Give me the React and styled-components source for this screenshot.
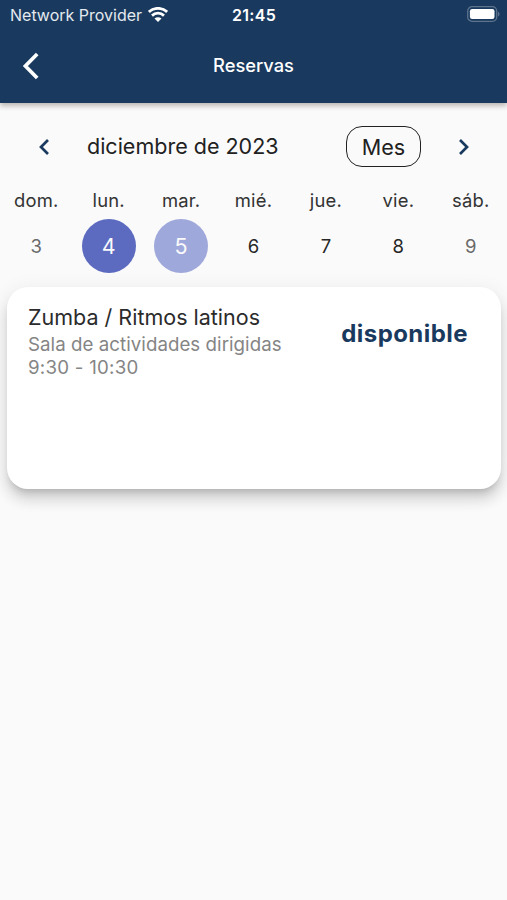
import React from 'react';
import styled, { createGlobalStyle } from 'styled-components';

const DAYS = [
  { name: 'dom.', number: 3, weekend: true },
  { name: 'lun.', number: 4, color: '#5c6bc0' },
  { name: 'mar.', number: 5, color: '#9fa8da' },
  { name: 'mié.', number: 6 },
  { name: 'jue.', number: 7 },
  { name: 'vie.', number: 8 },
  { name: 'sáb.', number: 9, weekend: true },
];

const App = () => {
  return (
    <>
      <GlobalStyle />
      <Screen>
        <Header>
          <StatusBar>
            <Carrier>
              Network Provider
              <WifiIcon />
            </Carrier>
            <Clock>21:45</Clock>
            <BatteryIcon />
          </StatusBar>
          <NavBar>
            <BackButton aria-label="Atrás">
              <svg width="18" height="28" viewBox="0 0 18 28" fill="none">
                <path d="M15.2 2L3.4 14L15.2 26" stroke="#fff" strokeWidth="3.7" />
              </svg>
            </BackButton>
            <Title>Reservas</Title>
          </NavBar>
        </Header>

        <MonthBar>
          <ArrowButton aria-label="Anterior">
            <svg width="12" height="18" viewBox="0 0 12 18" fill="none">
              <path d="M10 2L3 9L10 16" stroke="#193a5e" strokeWidth="2.7" />
            </svg>
          </ArrowButton>
          <Month>diciembre de 2023</Month>
          <FormatButton>Mes</FormatButton>
          <ArrowButton aria-label="Siguiente">
            <svg width="12" height="18" viewBox="0 0 12 18" fill="none">
              <path d="M2 2L9 9L2 16" stroke="#193a5e" strokeWidth="2.7" />
            </svg>
          </ArrowButton>
        </MonthBar>

        <Week>
          {DAYS.map(({ name, number, weekend, color }) => (
            <Day key={name}>
              <DayName>{name}</DayName>
              <DayNumber $weekend={weekend} $color={color}>
                {number}
              </DayNumber>
            </Day>
          ))}
        </Week>

        <Card>
          <div>
            <Activity>Zumba / Ritmos latinos</Activity>
            <Detail>Sala de actividades dirigidas</Detail>
            <Detail $time>9:30 - 10:30</Detail>
          </div>
          <Status>disponible</Status>
        </Card>
      </Screen>
    </>
  );
};

export default App;

const WifiIcon = () => (
  <svg width="20" height="15" viewBox="0 0 20 15" fill="none">
    <path d="M0.9 4.9C6 0.2 14 0.2 19.1 4.9" stroke="#fff" strokeWidth="2.9" />
    <path d="M4 8.6C7.5 5.4 12.5 5.4 16 8.6" stroke="#fff" strokeWidth="2.8" />
    <path d="M10 15L6.5 11.4C8.6 9.8 11.4 9.8 13.5 11.4Z" fill="#fff" />
  </svg>
);

const BatteryIcon = () => (
  <svg width="33" height="16" viewBox="0 0 33 16" fill="none">
    <rect x="0.7" y="0.7" width="29" height="14.6" rx="4.4" stroke="#5d738d" strokeWidth="1.3" />
    <rect x="2.9" y="3" width="24.6" height="10" rx="2.2" fill="#fff" />
    <path d="M31 5.8C33 6.6 33 9.6 31 10.4Z" fill="#5d738d" />
  </svg>
);

const GlobalStyle = createGlobalStyle`
  * {
    box-sizing: border-box;
  }

  body {
    margin: 0;
    background-color: #fafafa;
    font-family: Inter, "Liberation Sans", sans-serif;
  }

  p, h1, h2 {
    margin: 0;
    font-weight: normal;
  }

  button {
    padding: 0;
    border: none;
    background: none;
    font-family: inherit;
  }

  svg {
    display: block;
  }
`;

const Screen = styled.div`
  display: flex;
  flex-direction: column;
  width: 507px;
  height: 900px;
  overflow: hidden;
  background-color: #fafafa;
`;

const Header = styled.header`
  height: 103px;
  color: #fff;
  background-color: #193a5e;
  box-shadow: 0 3px 5px rgba(60, 40, 40, 0.32);
`;

const StatusBar = styled.div`
  display: grid;
  grid-template-columns: 1fr auto 1fr;
  align-items: center;
  height: 28px;
  padding: 2px 7px 0 10px;

  > :last-child {
    justify-self: end;
    margin-bottom: 2px;
  }
`;

const Carrier = styled.div`
  display: flex;
  align-items: center;
  gap: 6px;
  color: #e4e9ef;
  font-size: 16px;
  white-space: nowrap;

  svg {
    margin-bottom: 1px;
  }
`;

const Clock = styled.span`
  margin-right: 2px;
  font-size: 16px;
  font-weight: 600;
  letter-spacing: 0.3px;
`;

const NavBar = styled.nav`
  display: grid;
  grid-template-columns: 60px 1fr 60px;
  align-items: center;
  height: 75px;
`;

const BackButton = styled.button`
  margin-left: 22px;
`;

const Title = styled.h1`
  margin-bottom: 2px;
  font-size: 18.3px;
  font-weight: 500;
  text-align: center;
`;

const MonthBar = styled.div`
  display: flex;
  align-items: center;
  height: 87px;
  padding: 0 37px 0 38px;
`;

const ArrowButton = styled.button`
  width: 12px;
`;

const Month = styled.h2`
  flex: 1;
  margin: 0 0 1px 37px;
  color: #212121;
  font-size: 21.5px;
`;

const FormatButton = styled.button`
  width: 75px;
  height: 41px;
  margin-right: 37px;
  border: 1.35px solid #222;
  border-radius: 16px;
  color: #212121;
  font-size: 21.6px;
`;

const Week = styled.div`
  display: grid;
  grid-template-columns: repeat(7, 1fr);
  margin-bottom: 14px;
`;

const Day = styled.div`
  display: flex;
  flex-direction: column;
  align-items: center;
`;

const DayName = styled.span`
  height: 29px;
  color: #333;
  font-size: 18.4px;
  line-height: 21px;
  letter-spacing: 0.2px;
`;

const DayNumber = styled.span`
  display: flex;
  justify-content: center;
  align-items: center;
  width: 54px;
  height: 54px;
  padding-bottom: 1px;
  border-radius: 50%;
  color: ${({ $weekend, $color }) =>
    $color ? '#fafafa' : $weekend ? '#6a6a6a' : '#262626'};
  background-color: ${({ $color }) => $color};
  font-size: ${({ $color }) => ($color ? '21.5px' : '18.5px')};
`;

const Card = styled.section`
  display: flex;
  justify-content: space-between;
  height: 202px;
  margin: 0 6px 0 7px;
  padding: 17px 33px 0 21px;
  border-radius: 21px;
  background-color: #fff;
  box-shadow: 0 7px 7px -4px rgba(0, 0, 0, 0.17),
    0 11px 13px 1px rgba(0, 0, 0, 0.11), 0 4px 19px 3px rgba(0, 0, 0, 0.06);
`;

const Activity = styled.h2`
  color: #2b2b2b;
  font-size: 21.5px;
  line-height: 27px;
`;

const Detail = styled.p`
  color: #858585;
  font-size: 18.7px;
  line-height: ${({ $time }) => ($time ? '20px' : '27px')};
  letter-spacing: ${({ $time }) => ($time ? '0.25px' : '0.05px')};
`;

const Status = styled.strong`
  margin-top: 15px;
  color: #193a5e;
  font-size: 24px;
  font-weight: 700;
  line-height: 30px;
  letter-spacing: 0.45px;
`;
